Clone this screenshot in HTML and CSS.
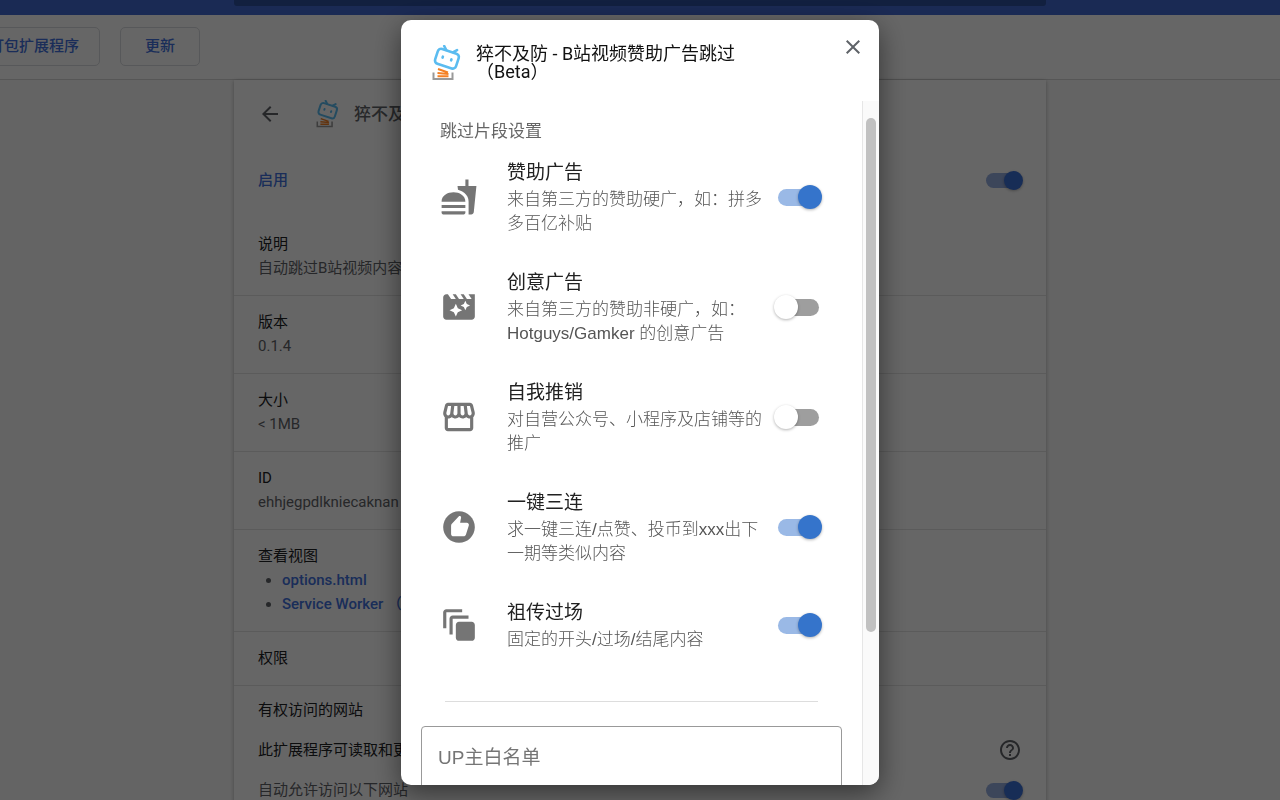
FILE: index.html
```html
<!DOCTYPE html>
<html lang="zh-CN">
<head>
  <meta charset="UTF-8" />
  <meta name="viewport" content="width=device-width, initial-scale=1.0">
  <title>扩展程序</title>
  <link rel="stylesheet" href="styles.css">
</head>
<body>
  <!-- shared logo -->
  <svg class="defs" width="0" height="0">
    <symbol id="logo" viewBox="0 0 30 36">
      <path d="M2.500 27.500v6.500h19v-6.500" fill="none" stroke="#999" stroke-width="2" />
      <path d="M7 24l10 3.500M6.500 28l11 1M6.500 31.200h11" fill="none" stroke="#f48024" stroke-width="1.900" />
      <g transform="rotate(18 16 13.500)" fill="none" stroke="#5bbcf0" stroke-width="2.600" stroke-linecap="round">
        <rect x="5" y="6" width="22" height="15.500" rx="3.500" fill="#fff" />
        <path d="M9.500 2.500l3 3M23 2.500l-3 3" />
        <path d="M11.500 13v1M20.500 13v1" />
      </g>
    </symbol>
  </svg>

  <div class="page">
    <header class="topbar">
      <div class="search"></div>
    </header>
    <div class="toolbar">
      <button type="button">打包扩展程序</button>
      <button type="button">更新</button>
    </div>

    <main class="card">
      <div class="card-header">
        <button type="button" class="icon-btn" aria-label="返回">
          <svg width="24" height="24" viewBox="0 0 24 24"><path d="M20 11H7.830l5.590-5.590L12 4l-8 8 8 8 1.410-1.410L7.830 13H20v-2z" /></svg>
        </button>
        <svg class="card-logo" width="24" height="28"><use href="#logo" /></svg>
        <h1>猝不及防</h1>
      </div>
      <div class="enable-row">
        <label for="enable">启用</label>
        <input type="checkbox" id="enable" class="switch small" checked>
      </div>
      <section>
        <h2>说明</h2>
        <p>自动跳过B站视频内容</p>
      </section>
      <section>
        <h2>版本</h2>
        <p>0.1.4</p>
      </section>
      <section>
        <h2>大小</h2>
        <p>&lt; 1MB</p>
      </section>
      <section>
        <h2>ID</h2>
        <p>ehhjegpdlkniecaknan</p>
      </section>
      <section>
        <h2>查看视图</h2>
        <ul>
          <li><a href="#">options.html</a></li>
          <li><a href="#">Service Worker （无效）</a></li>
        </ul>
      </section>
      <section>
        <h2>权限</h2>
      </section>
      <section class="sites">
        <h2>有权访问的网站</h2>
        <div class="site-row">
          <h2>此扩展程序可读取和更改</h2>
          <svg width="24" height="24" viewBox="0 0 24 24"><path d="M11 18h2v-2h-2v2zm1-16C6.480 2 2 6.480 2 12s4.480 10 10 10 10-4.480 10-10S17.520 2 12 2zm0 18c-4.410 0-8-3.590-8-8s3.590-8 8-8 8 3.590 8 8-3.590 8-8 8zm0-14c-2.210 0-4 1.790-4 4h2c0-1.100.9-2 2-2s2 .9 2 2c0 2-3 1.750-3 5h2c0-2.250 3-2.500 3-5 0-2.210-1.790-4-4-4z" /></svg>
        </div>
        <div class="site-row">
          <label for="allow">自动允许访问以下网站</label>
          <input type="checkbox" id="allow" class="switch small" checked>
        </div>
      </section>
    </main>
  </div>

  <div class="overlay">
    <div class="dialog" role="dialog" aria-labelledby="dialogTitle">
      <div class="dialog-header">
        <svg width="30" height="36"><use href="#logo" /></svg>
        <h2 id="dialogTitle">猝不及防 - B站视频赞助广告跳过<br>（Beta）</h2>
        <button type="button" class="icon-btn" aria-label="关闭">
          <svg width="24" height="24" viewBox="0 0 24 24"><path d="M19 6.410L17.590 5 12 10.590 6.410 5 5 6.410 10.590 12 5 17.590 6.410 19 12 13.410 17.590 19 19 17.590 13.410 12z" /></svg>
        </button>
      </div>

      <div class="dialog-body">
        <div class="options">
          <h3>跳过片段设置</h3>

          <div class="option">
            <svg viewBox="0 0 24 24"><path d="M18.060 22.990h1.660c.84 0 1.530-.64 1.630-1.460L23 5.050h-5V1h-1.970v4.050h-4.970l.3 2.340c1.710.47 3.310 1.320 4.270 2.260 1.440 1.420 2.430 2.890 2.430 5.290v8.050zM1 21.990V21h15.030v.99c0 .55-.45 1-1.010 1H2.010c-.56 0-1.010-.45-1.010-1zm15.030-7c0-8-15.030-8-15.030 0h15.030zM1.020 17h15v2h-15z" /></svg>
            <div class="option-text">
              <label for="sponsor">赞助广告</label>
              <p>来自第三方的赞助硬广，如：拼多多百亿补贴</p>
            </div>
            <input type="checkbox" id="sponsor" class="switch" checked>
          </div>

          <div class="option">
            <svg viewBox="0 0 24 24"><path d="M18 4l2 3h-3l-2-3h-2l2 3h-3l-2-3H8l2 3H7L5 4H4c-1.100 0-1.990.9-1.990 2L2 18c0 1.100.9 2 2 2h16c1.100 0 2-.9 2-2V4h-4zm-6.750 11.250L10 18l-1.250-2.750L6 14l2.750-1.250L10 10l1.250 2.750L14 14l-2.750 1.250zm5.690-3.310L16 14l-.94-2.060L13 11l2.060-.94L16 8l.94 2.060L19 11l-2.060.94z" /></svg>
            <div class="option-text">
              <label for="creative">创意广告</label>
              <p>来自第三方的赞助非硬广，如：Hotguys/Gamker 的创意广告</p>
            </div>
            <input type="checkbox" id="creative" class="switch">
          </div>

          <div class="option">
            <svg viewBox="0 0 24 24"><path d="M21.900 8.890l-1.050-4.370c-.22-.9-1-1.520-1.910-1.520H5.050c-.9 0-1.690.63-1.900 1.520L2.100 8.890c-.24 1.020-.02 2.060.62 2.880.08.11.19.19.28.29V19c0 1.100.9 2 2 2h14c1.100 0 2-.9 2-2v-6.940c.09-.09.2-.18.28-.28.64-.82.87-1.870.62-2.890zm-2.990-3.900l1.050 4.370c.1.42.01.84-.25 1.170-.14.18-.44.47-.94.47-.61 0-1.140-.49-1.210-1.140L16.980 5l1.930-.01zM13 5h1.960l.54 4.520c.05.39-.07.78-.33 1.070-.22.26-.54.41-.95.41-.67 0-1.220-.59-1.220-1.310V5zM8.490 9.520L9.040 5H11v4.690c0 .72-.55 1.310-1.290 1.310-.34 0-.65-.15-.89-.41-.25-.29-.37-.68-.33-1.070zm-4.450-.16L5.050 5h1.970l-.58 4.860c-.08.65-.6 1.140-1.210 1.140-.49 0-.8-.29-.93-.47-.27-.32-.36-.75-.26-1.170zM5 19v-6.030c.08.010.15.030.23.030.87 0 1.660-.36 2.240-.95.6.6 1.400.95 2.310.95.87 0 1.650-.36 2.230-.93.59.57 1.390.93 2.290.93.84 0 1.640-.35 2.240-.95.58.59 1.370.95 2.240.95.08 0 .15-.02.23-.03V19H5z" /></svg>
            <div class="option-text">
              <label for="selfpromo">自我推销</label>
              <p>对自营公众号、小程序及店铺等的推广</p>
            </div>
            <input type="checkbox" id="selfpromo" class="switch">
          </div>

          <div class="option">
            <svg viewBox="0 0 24 24"><path d="M12 2C6.480 2 2 6.480 2 12s4.480 10 10 10 10-4.480 10-10S17.520 2 12 2z" /><path class="thumb" d="M7 11.200c0-.5.2-.9.500-1.200l4.300-4.700c.3-.3.8-.4 1.200-.1.3.2.4.6.3 1L12.700 9.300h4.200c1 0 1.600.9 1.300 1.800l-1.800 5.700c-.2.7-.8 1.100-1.500 1.100H8.500c-.8 0-1.500-.7-1.500-1.500z" /></svg>
            <div class="option-text">
              <label for="triple">一键三连</label>
              <p>求一键三连/点赞、投币到xxx出下一期等类似内容</p>
            </div>
            <input type="checkbox" id="triple" class="switch" checked>
          </div>

          <div class="option">
            <svg viewBox="0 0 24 24"><path d="M14 2H4c-1.100 0-2 .9-2 2v10h2V4h10V2zm4 4H8c-1.100 0-2 .9-2 2v10h2V8h10V6zm2 4h-8c-1.100 0-2 .9-2 2v8c0 1.100.9 2 2 2h8c1.100 0 2-.9 2-2v-8c0-1.100-.9-2-2-2z" /></svg>
            <div class="option-text">
              <label for="intro">祖传过场</label>
              <p>固定的开头/过场/结尾内容</p>
            </div>
            <input type="checkbox" id="intro" class="switch" checked>
          </div>

          <hr>
          <textarea aria-label="UP主白名单" placeholder="UP主白名单" rows="5"></textarea>
        </div>
        <div class="scrollbar">
          <div class="scroll-thumb"></div>
        </div>
      </div>
    </div>
  </div>
</body>
</html>
```

FILE: styles.css
```css
* {
  box-sizing: border-box;
}

body {
  margin: 0;
  font-family: Roboto, "Noto Sans CJK SC", sans-serif;
  font-size: 15px;
  line-height: 24px;
  color: #5f6368;
  background: #fafafa;
}

h1, h2, h3, p, ul {
  margin: 0;
  padding: 0;
}

a {
  color: #4272de;
  font-weight: 500;
  text-decoration: none;
}

.defs {
  position: absolute;
}

.page {
  height: 100vh;
  overflow: hidden;
}

/* top of the extensions page */
.topbar {
  height: 15px;
  background: #4369d2;
}

.search {
  width: 812px;
  height: 6px;
  margin: 0 auto;
  border-radius: 0 0 3px 3px;
  background: #2d509f;
}

.toolbar {
  display: flex;
  align-items: center;
  gap: 20px;
  height: 65px;
  margin-left: -32px;
  padding-bottom: 2px;
  background: #fff;
  border-bottom: 1px solid #d6d6d6;
}

.toolbar button {
  min-width: 80px;
  height: 39px;
  padding: 0 20px;
  border: 1px solid #dadce0;
  border-radius: 5px;
  background: #fff;
  color: #4272de;
  font: inherit;
  font-weight: 500;
  white-space: nowrap;
}

.card {
  width: 812px;
  margin: 0 auto;
  background: #fff;
  box-shadow: 0 1px 4px rgba(0,0,0,0.3);
}

.card-header {
  display: flex;
  align-items: center;
  height: 68px;
  padding: 0 24px;
}

.card-header h1 {
  font-size: 17px;
  font-weight: 500;
}

.card-logo {
  margin: 0 15px 0 33px;
}

.icon-btn {
  display: block;
  width: 24px;
  height: 24px;
  padding: 0;
  border: none;
  background: none;
  cursor: pointer;
}

svg {
  flex: none;
  fill: #5f6368;
}

.enable-row {
  display: flex;
  align-items: center;
  justify-content: space-between;
  height: 64px;
  padding: 0 24px;
  color: #4272de;
  font-weight: 500;
}

.card section {
  padding: 14px 24px 15px;
  border-bottom: 1px solid #e4e4e4;
}

.enable-row + section {
  margin-top: 6px;
}

.card section h2 {
  font-size: 15px;
  font-weight: 400;
  color: #202124;
}

.card ul {
  padding-left: 24px;
}

.card section.sites {
  padding-top: 12px;
}

.site-row {
  display: flex;
  align-items: center;
  justify-content: space-between;
  margin-top: 16px;
}

/* switches */
.switch {
  appearance: none;
  position: relative;
  flex: none;
  width: 41px;
  height: 17px;
  margin: 0;
  border-radius: 9px;
  background: #9e9e9e;
  cursor: pointer;
}

.switch::before {
  content: "";
  position: absolute;
  top: -4px;
  left: -4px;
  width: 24px;
  height: 24px;
  border-radius: 50%;
  background: #fff;
  box-shadow: 0 1px 3px rgba(0,0,0,0.3);
}

.switch:checked {
  background: #9ab9e6;
}

.switch:checked::before {
  left: 20px;
  background: #3574cb;
}

.switch.small {
  width: 36px;
  height: 15px;
  background: #97aee0;
}

.switch.small::before {
  top: -2px;
  left: 18px;
  width: 19px;
  height: 19px;
  background: #3a70d8;
}

/* dialog */
.overlay {
  position: fixed;
  inset: 0;
  display: flex;
  justify-content: center;
  padding: 20px 0 15px;
  background: rgba(0,0,0,0.6);
}

.dialog {
  display: flex;
  flex-direction: column;
  width: 478px;
  overflow: hidden;
  border-radius: 10px;
  background: #fff;
  box-shadow: 0 8px 28px rgba(0,0,0,0.5);
}

.dialog-header {
  display: flex;
  align-items: flex-start;
  padding: 25px 14px 20px 30px;
}

.dialog-header h2 {
  flex: 1;
  margin-left: 15px;
  font-size: 18px;
  line-height: 18px;
  font-weight: 400;
  color: #111;
}

.dialog-header .icon-btn {
  margin-top: -10px;
}

.dialog-body {
  display: flex;
  flex: 1;
  min-height: 0;
}

.options {
  flex: 1;
  overflow: hidden;
  padding: 19px 20px 0;
  font-family: "Liberation Sans", "Noto Sans CJK SC", sans-serif;
}

.options h3 {
  padding-left: 19px;
  font-size: 17px;
  font-weight: 400;
  color: #666;
}

.option {
  display: flex;
  align-items: center;
  padding: 0 23px 0 19px;
  margin-bottom: 32px;
}

h3 + .option {
  margin-top: 14px;
}

.option svg {
  width: 38px;
  height: 38px;
  fill: #757575;
}

.option .thumb {
  fill: #fff;
}

.option-text {
  flex: 1;
  margin: 0 15px 0 29px;
}

.option label {
  display: block;
  font-size: 19px;
  line-height: 30px;
  color: #212121;
}

.option p {
  font-size: 17px;
  font-weight: 300;
  color: #555;
}

.options hr {
  height: 1px;
  margin: 49px 24px 24px;
  border: none;
  background: #ddd;
}

.options textarea {
  display: block;
  width: 100%;
  padding: 19px 16px;
  border: 1px solid #999;
  border-radius: 4px;
  font: inherit;
  font-size: 19px;
  resize: none;
}

.options textarea::placeholder {
  color: #757575;
}

.scrollbar {
  width: 17px;
  padding: 17px 3px 0;
  border-left: 1px solid #e6e6e6;
  background: #fafafa;
}

.scroll-thumb {
  width: 10px;
  height: 77%;
  border-radius: 5px;
  background: #c1c1c1;
}
```
